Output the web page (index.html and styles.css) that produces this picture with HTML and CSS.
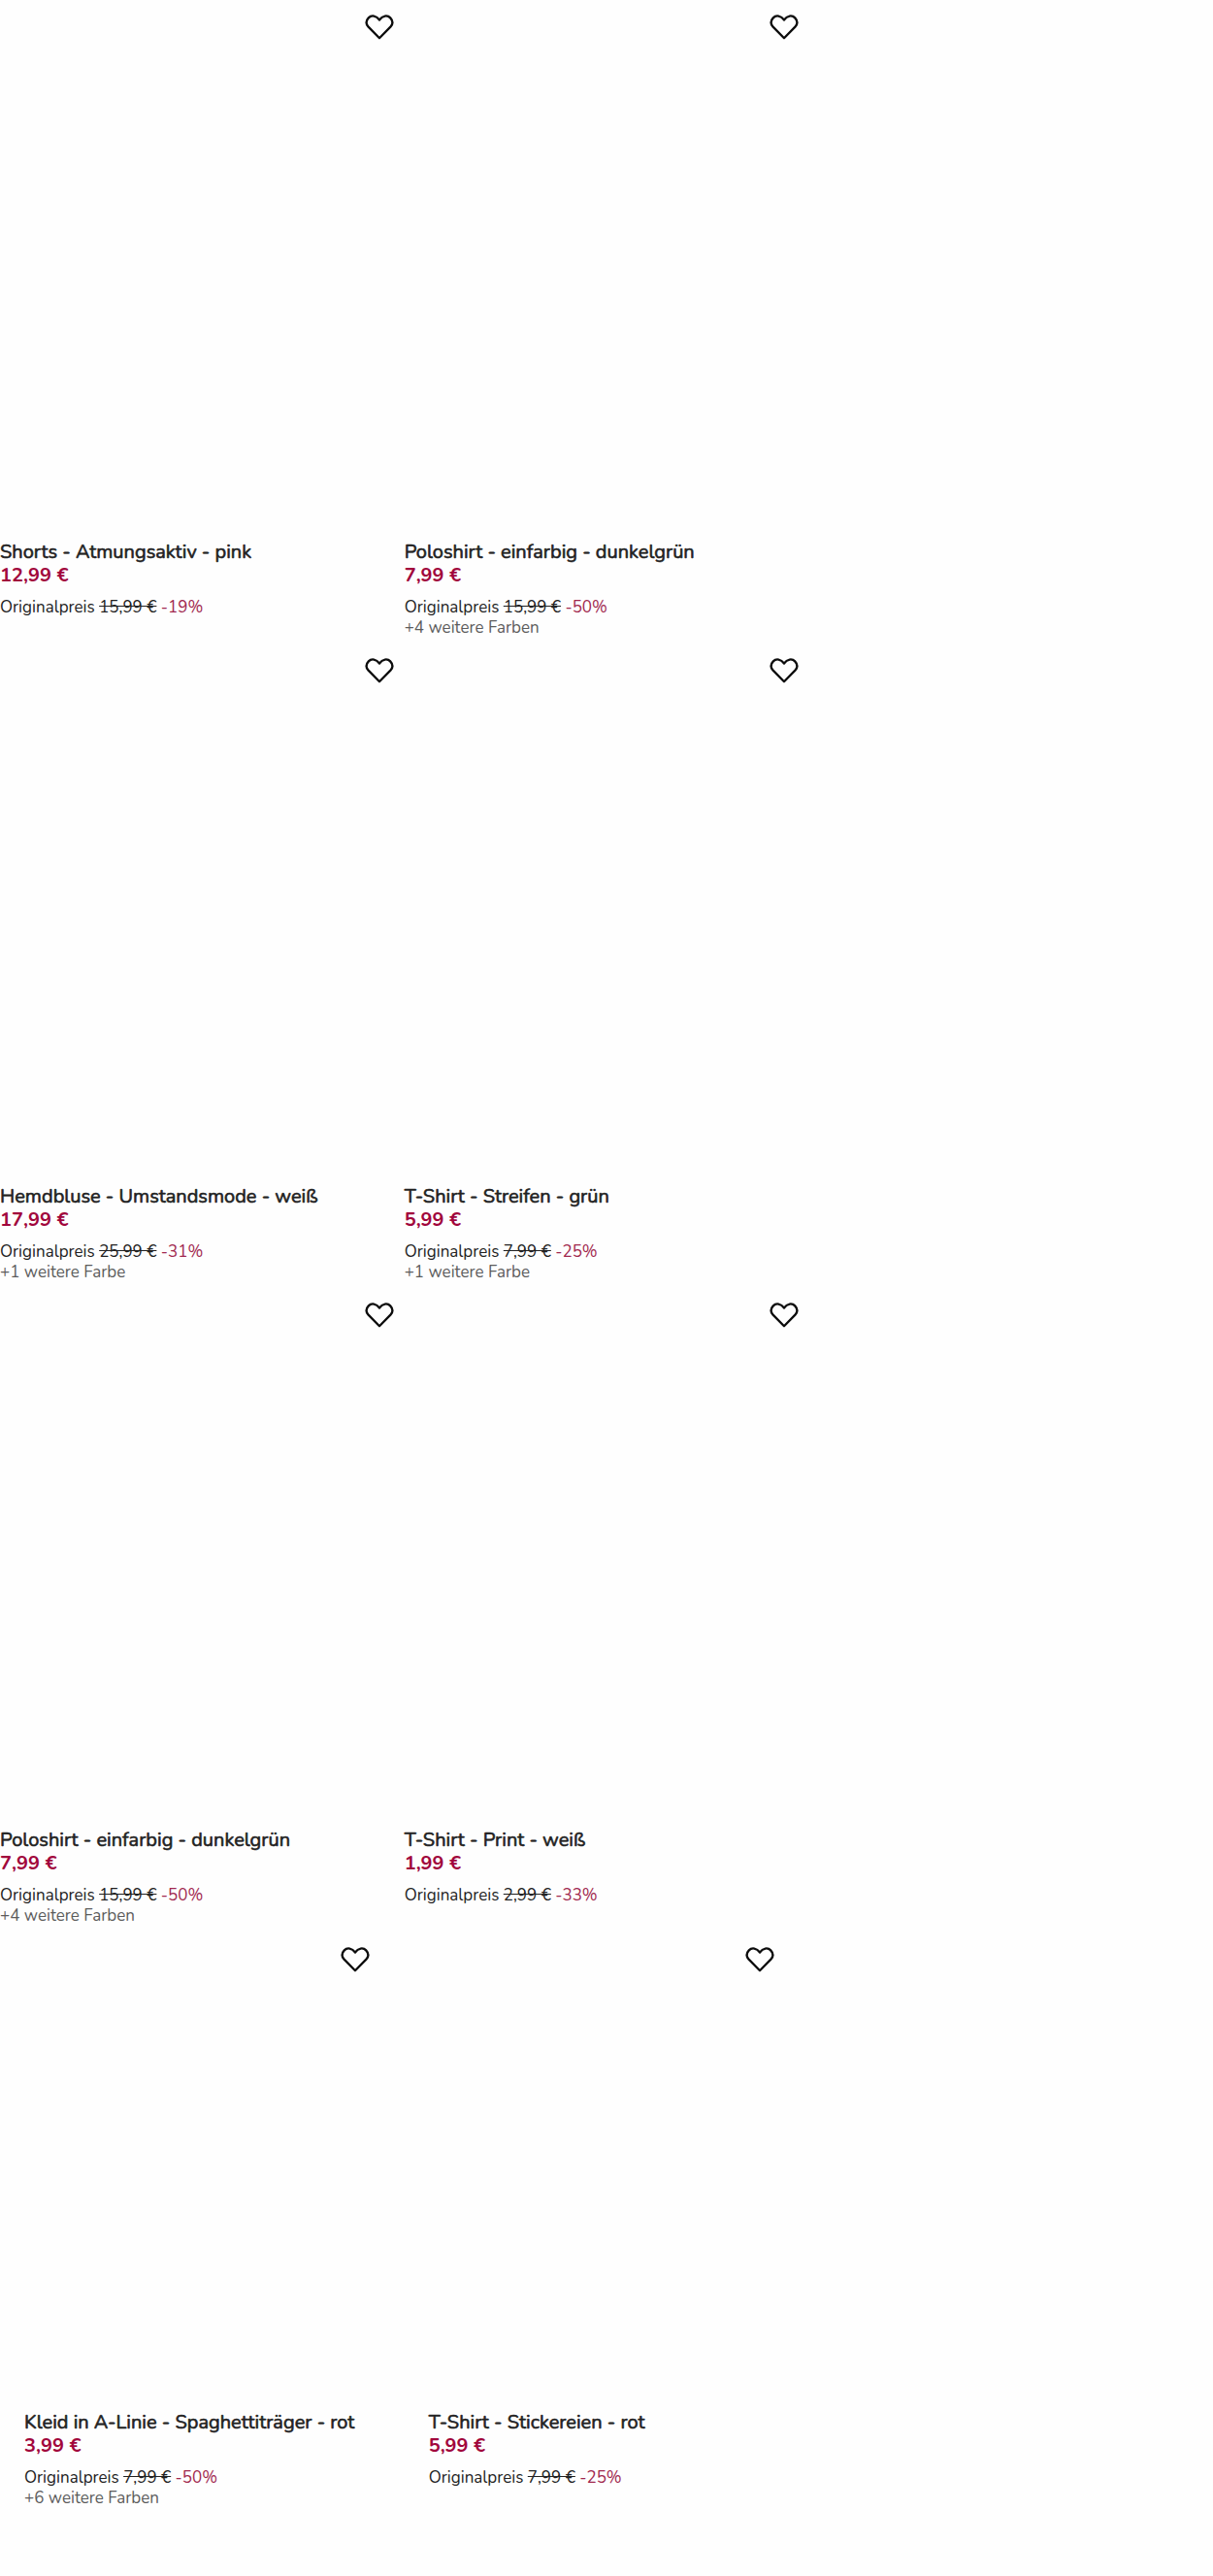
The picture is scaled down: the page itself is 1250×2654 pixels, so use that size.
FILE: index.html
```html
<!DOCTYPE html>
<html lang="de">
<head>
<meta charset="utf-8">
<meta name="viewport" content="width=device-width, initial-scale=1">
<title>Produkte</title>
<link rel="stylesheet" href="styles.css">
</head>
<body>
<svg class="sprite" aria-hidden="true">
  <symbol id="heart" viewBox="0 0 32 28">
    <path d="M16 6.500C12.800 2 7.800 1.200 4.800 4.400C2.100 7.300 2.100 10.900 4.600 13.600L16 25.200L27.400 13.600C29.900 10.900 29.900 7.300 27.200 4.400C24.200 1.200 19.200 2 16 6.500Z" fill="none" stroke="#0c0c0c" stroke-width="2.300" stroke-linejoin="round"/>
  </symbol>
</svg>
<main>
<section class="products">
  <article class="card">
    <div class="media"><button class="wish" type="button" aria-label="Merken"><svg class="heart"><use href="#heart"/></svg></button></div>
    <h2 class="title">Shorts - Atmungsaktiv - pink</h2>
    <p class="price">12,99 €</p>
    <p class="original">Originalpreis <s>15,99 €</s> <span class="discount">-19%</span></p>
  </article>
  <article class="card">
    <div class="media"><button class="wish" type="button" aria-label="Merken"><svg class="heart"><use href="#heart"/></svg></button></div>
    <h2 class="title">Poloshirt - einfarbig - dunkelgrün</h2>
    <p class="price">7,99 €</p>
    <p class="original">Originalpreis <s>15,99 €</s> <span class="discount">-50%</span></p>
    <p class="colors">+4 weitere Farben</p>
  </article>
</section>
<section class="products">
  <article class="card">
    <div class="media"><button class="wish" type="button" aria-label="Merken"><svg class="heart"><use href="#heart"/></svg></button></div>
    <h2 class="title">Hemdbluse - Umstandsmode - weiß</h2>
    <p class="price">17,99 €</p>
    <p class="original">Originalpreis <s>25,99 €</s> <span class="discount">-31%</span></p>
    <p class="colors">+1 weitere Farbe</p>
  </article>
  <article class="card">
    <div class="media"><button class="wish" type="button" aria-label="Merken"><svg class="heart"><use href="#heart"/></svg></button></div>
    <h2 class="title">T-Shirt - Streifen - grün</h2>
    <p class="price">5,99 €</p>
    <p class="original">Originalpreis <s>7,99 €</s> <span class="discount">-25%</span></p>
    <p class="colors">+1 weitere Farbe</p>
  </article>
</section>
<section class="products">
  <article class="card">
    <div class="media"><button class="wish" type="button" aria-label="Merken"><svg class="heart"><use href="#heart"/></svg></button></div>
    <h2 class="title">Poloshirt - einfarbig - dunkelgrün</h2>
    <p class="price">7,99 €</p>
    <p class="original">Originalpreis <s>15,99 €</s> <span class="discount">-50%</span></p>
    <p class="colors">+4 weitere Farben</p>
  </article>
  <article class="card">
    <div class="media"><button class="wish" type="button" aria-label="Merken"><svg class="heart"><use href="#heart"/></svg></button></div>
    <h2 class="title">T-Shirt - Print - weiß</h2>
    <p class="price">1,99 €</p>
    <p class="original">Originalpreis <s>2,99 €</s> <span class="discount">-33%</span></p>
  </article>
</section>
<section class="products products-inset">
  <article class="card">
    <div class="media"><button class="wish" type="button" aria-label="Merken"><svg class="heart"><use href="#heart"/></svg></button></div>
    <h2 class="title">Kleid in A-Linie - Spaghettiträger - rot</h2>
    <p class="price">3,99 €</p>
    <p class="original">Originalpreis <s>7,99 €</s> <span class="discount">-50%</span></p>
    <p class="colors">+6 weitere Farben</p>
  </article>
  <article class="card">
    <div class="media"><button class="wish" type="button" aria-label="Merken"><svg class="heart"><use href="#heart"/></svg></button></div>
    <h2 class="title">T-Shirt - Stickereien - rot</h2>
    <p class="price">5,99 €</p>
    <p class="original">Originalpreis <s>7,99 €</s> <span class="discount">-25%</span></p>
  </article>
</section>
</main>
</body>
</html>
```
FILE: styles.css
```css
* { box-sizing: border-box; }

body {
  margin: 0;
  padding-bottom: 60px;
  background: #fefefe;
  color: #222;
  font-family: Nunito, Lato, sans-serif;
}

.sprite { display: none; }

.products {
  display: grid;
  grid-template-columns: repeat(3, 1fr);
}

.card {
  min-width: 0;
  padding-bottom: 7px;
}

.products-inset .card { padding: 0 25px; }

.media {
  display: flex;
  justify-content: flex-end;
  align-items: flex-start;
  aspect-ratio: 4 / 5;
  margin-bottom: 35px;
}

.products-inset .media { margin-bottom: 33px; }

.wish {
  display: flex;
  align-items: center;
  justify-content: center;
  width: 51px;
  height: 55px;
  padding: 0;
  border: 0;
  background: none;
  cursor: pointer;
}

.heart {
  width: 32px;
  height: 28px;
}

.title {
  margin: 0;
  font-size: 20px;
  font-weight: 400;
  line-height: 25px;
  -webkit-text-stroke: 0.03em;
}

.price {
  margin: 0 0 10px;
  color: #a1063c;
  font-size: 20px;
  font-weight: 700;
  line-height: 24px;
}

.original,
.colors {
  margin: 0;
  font-size: 17px;
  line-height: 21px;
}

.discount { color: #a1284f; }

.colors { color: #5c5c5c; }
```
